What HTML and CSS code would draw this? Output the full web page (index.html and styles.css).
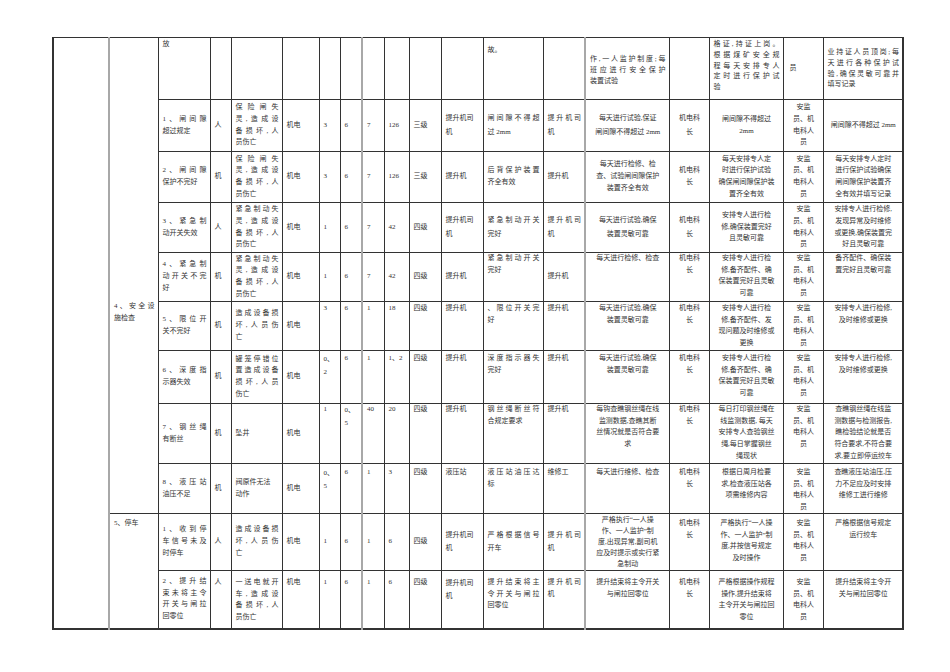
FILE: index.html
```html
<!DOCTYPE html>
<html lang="zh-CN">
<head>
<meta charset="utf-8">
<title>安全设施检查</title>
<link rel="stylesheet" href="styles.css">
</head>
<body>
<div class="sheet">
<table class="grid">
<colgroup>
<col class="w1"><col class="w2 g"><col class="w3"><col class="w4"><col class="w5"><col class="w6"><col class="w7"><col class="w8"><col class="w9 g"><col class="w10"><col class="w11"><col class="w12"><col class="w13"><col class="w14"><col class="w15 g"><col class="w16"><col class="w17"><col class="w18"><col class="w19">
</colgroup>
<tbody>
<tr class="r0">
<td rowspan="11"></td>
<td rowspan="9" class="sec"><span class="jl">4、安全设</span>施检查</td>
<td class="t">放</td>
<td></td><td></td><td></td><td></td><td></td><td></td><td></td><td></td><td></td>
<td class="t p6">故。</td>
<td></td>
<td class="up"><span class="jl">作,一人监护制度;每</span><span class="jl">班应进行安全保护</span>装置试验</td>
<td></td>
<td class="t"><span class="jl">格证,持证上岗。</span><span class="jl">根据煤矿安全规</span><span class="jl">程每天安排专人</span><span class="jl">定时进行保护试</span>验</td>
<td class="ind">员</td>
<td><span class="jl">业持证人员顶岗;每</span><span class="jl">天进行各种保护试</span><span class="jl">验,确保灵敏可靠并</span>填写记录</td>
</tr>
<tr class="r1">
<td><span class="jl">1、闸间隙</span>超过规定</td>
<td>人</td>
<td><span class="jl">保险闸失</span><span class="jl">灵,造成设</span><span class="jl">备损坏,人</span>员伤亡</td>
<td>机电</td><td>3</td><td>6</td><td>7</td><td>126</td><td>三级</td>
<td class="l13">提升机司<br>机</td>
<td class="l13"><span class="jl">闸间隙不得超</span>过 2mm</td>
<td class="l13"><span class="jl">提升机司</span>机</td>
<td class="c l13">每天进行试验,保证<br>闸间隙不得超过 2mm</td>
<td class="c l13">机电科<br>长</td>
<td class="c">闸间隙不得超过<br>2mm</td>
<td class="c">安监<br>员、机<br>电科人<br>员</td>
<td class="c">闸间隙不得超过 2mm</td>
</tr>
<tr class="r2">
<td><span class="jl">2、闸间隙</span>保护不完好</td>
<td>机</td>
<td><span class="jl">保险闸失</span><span class="jl">灵,造成设</span><span class="jl">备损坏,人</span>员伤亡</td>
<td>机电</td><td>3</td><td>6</td><td>7</td><td>126</td><td>三级</td>
<td>提升机</td>
<td><span class="jl">后背保护装置</span>齐全有效</td>
<td>提升机</td>
<td class="c">每天进行检修、检<br>查、试验闸间隙保护<br>装置齐全有效</td>
<td class="c">机电科<br>长</td>
<td class="c">每天安排专人定<br>时进行保护试验<br>确保闸间隙保护装<br>置齐全有效</td>
<td class="c">安监<br>员、机<br>电科人<br>员</td>
<td class="c">每天安排专人定时<br>进行保护试验确保<br>闸间隙保护装置齐<br>全有效并填写记录</td>
</tr>
<tr class="r3">
<td><span class="jl">3、紧急制</span>动开关失效</td>
<td>人</td>
<td><span class="jl">紧急制动失</span><span class="jl">灵,造成设</span><span class="jl">备损坏,人</span>员伤亡</td>
<td>机电</td><td>1</td><td>6</td><td>7</td><td>42</td><td>四级</td>
<td class="l13">提升机司<br>机</td>
<td class="l13"><span class="jl">紧急制动开关</span>完好</td>
<td class="l13"><span class="jl">提升机司</span>机</td>
<td class="c l13">每天进行试验,确保<br>装置灵敏可靠</td>
<td class="c l13">机电科<br>长</td>
<td class="c">安排专人进行检<br>修,确保装置完好<br>且灵敏可靠</td>
<td class="c">安监<br>员、机<br>电科人<br>员</td>
<td class="c">安排专人进行检修,<br>发现异常及时维修<br>或更换,确保装置完<br>好且灵敏可靠</td>
</tr>
<tr class="r4">
<td><span class="jl">4、紧急制</span><span class="jl">动开关不完</span>好</td>
<td>机</td>
<td><span class="jl">紧急制动失</span><span class="jl">灵,造成设</span><span class="jl">备损坏,人</span>员伤亡</td>
<td>机电</td><td>1</td><td>6</td><td>7</td><td>42</td><td>四级</td>
<td>提升机</td>
<td class="t"><span class="jl">紧急制动开关</span>完好</td>
<td>提升机</td>
<td class="c t">每天进行检修、检查</td>
<td class="c t">机电科<br>长</td>
<td class="c t">安排专人进行检<br>修,备齐配件、确<br>保装置完好且灵敏<br>可靠</td>
<td class="c t">安监<br>员、机<br>电科人<br>员</td>
<td class="c t">备齐配件、确保装<br>置完好且灵敏可靠</td>
</tr>
<tr class="r5">
<td><span class="jl">5、限位开</span>关不完好</td>
<td>机</td>
<td><span class="jl">造成设备损</span><span class="jl">坏,人员伤</span>亡</td>
<td>机电</td>
<td class="t">3</td><td class="t">6</td><td class="t">1</td><td class="t">18</td><td class="t">四级</td><td class="t">提升机</td>
<td class="t"><span class="jl">、限位开关完</span>好</td>
<td class="t">提升机</td>
<td class="c t">每天进行试验,确保<br>装置灵敏可靠</td>
<td class="c t">机电科<br>长</td>
<td class="c t">安排专人进行检<br>修,备齐配件、发<br>现问题及时维修或<br>更换</td>
<td class="c t">安监<br>员、机<br>电科人<br>员</td>
<td class="c t">安排专人进行检修,<br>及时维修或更换</td>
</tr>
<tr class="r6">
<td><span class="jl">6、深度指</span>示器失效</td>
<td>机</td>
<td><span class="jl">罐笼停错位</span><span class="jl">置造成设备</span><span class="jl">损坏,人员</span>伤亡</td>
<td>机电</td>
<td class="t l13">0、<br>2</td><td class="t">6</td><td class="t">1</td><td class="t">1、2</td><td class="t">四级</td><td class="t">提升机</td>
<td class="t"><span class="jl">深度指示器失</span>完好</td>
<td class="t">提升机</td>
<td class="c t">每天进行试验,确保<br>装置灵敏可靠</td>
<td class="c t">机电科<br>长</td>
<td class="c t">安排专人进行检<br>修,备齐配件、确<br>保装置完好且灵敏<br>可靠</td>
<td class="c t">安监<br>员、机<br>电科人<br>员</td>
<td class="c t">安排专人进行检修,<br>及时维修或更换</td>
</tr>
<tr class="r7">
<td><span class="jl">7、钢丝绳</span>有断丝</td>
<td>机</td>
<td>坠井</td>
<td>机电</td>
<td class="t">1</td><td class="t l13">0、<br>5</td><td class="t">40</td><td class="t">20</td><td class="t">四级</td><td class="t">提升机</td>
<td class="t"><span class="jl">钢丝绳断丝符</span>合规定要求</td>
<td class="t">提升机</td>
<td class="c t">每钩查瞧钢丝绳在线<br>监测数据,查瞧其断<br>丝情况就是否符合要<br>求</td>
<td class="c t">机电科<br>长</td>
<td class="c t">每日打印钢丝绳在<br>线监测数据, 每天<br>安排专人查验钢丝<br>绳,每日掌握钢丝<br>绳现状</td>
<td class="c t">安监<br>员、机<br>电科人<br>员</td>
<td class="c t">查瞧钢丝绳在线监<br>测数据与检测报告,<br>瞧检验结论就是否<br>符合要求,不符合要<br>求,要立即停运绞车</td>
</tr>
<tr class="r8">
<td><span class="jl">8、液压站</span>油压不足</td>
<td>机</td>
<td>阀原件无法<br>动作</td>
<td>机电</td>
<td class="t l13">0、<br>5</td><td class="t">6</td><td class="t">1</td><td class="t">3</td><td class="t">四级</td><td class="t">液压站</td>
<td class="t"><span class="jl">液压站油压达</span>标</td>
<td class="t">维修工</td>
<td class="c t">每天进行维修、检查</td>
<td class="c t">机电科<br>长</td>
<td class="c t">根据日周月检要<br>求,检查液压站各<br>项需维修内容</td>
<td class="c t">安监<br>员、机<br>电科人<br>员</td>
<td class="c t">查瞧液压站油压,压<br>力不足应及时安排<br>维修工进行维修</td>
</tr>
<tr class="r9">
<td rowspan="2" class="sec2">5、停车</td>
<td><span class="jl">1、收到停</span><span class="jl">车信号未及</span>时停车</td>
<td>人</td>
<td><span class="jl">造成设备损</span><span class="jl">坏,人员伤</span>亡</td>
<td>机电</td><td>1</td><td>6</td><td>1</td><td>6</td><td>四级</td>
<td class="l13">提升机司<br>机</td>
<td class="l13"><span class="jl">严格根据信号</span>开车</td>
<td class="l13"><span class="jl">提升机司</span>机</td>
<td class="c t tight">严格执行“一人操<br>作、一人监护”制<br>度,出现异常,副司机<br>应及时提示或实行紧<br>急制动</td>
<td class="c t">机电科<br>长</td>
<td class="c t">严格执行“一人操<br>作、一人监护”制<br>度,并按信号规定<br>及时操作</td>
<td class="c t">安监<br>员、机<br>电科人<br>员</td>
<td class="c t">严格根据信号规定<br>运行绞车</td>
</tr>
<tr class="r10">
<td><span class="jl">2、提升结</span><span class="jl">束未将主令</span><span class="jl">开关与闸拉</span>回零位</td>
<td class="t">人</td>
<td class="t"><span class="jl">一送电就开</span><span class="jl">车,造成设</span><span class="jl">备损坏,人</span>员伤亡</td>
<td class="t">机电</td><td class="t">1</td><td class="t">6</td><td class="t">1</td><td class="t">6</td><td class="t">四级</td>
<td class="t l13">提升机司<br>机</td>
<td class="t"><span class="jl">提升结束将主</span><span class="jl">令开关与闸拉</span>回零位</td>
<td class="t"><span class="jl">提升机司</span>机</td>
<td class="c t">提升结束将主令开关<br>与闸拉回零位</td>
<td class="c t">机电科<br>长</td>
<td class="c t">严格根据操作规程<br>操作,提升结束将<br>主令开关与闸拉回<br>零位</td>
<td class="c t">安监<br>员、机<br>电科人<br>员</td>
<td class="c t">提升结束将主令开<br>关与闸拉回零位</td>
</tr>
</tbody>
</table>
</div>
</body>
</html>
```

FILE: styles.css
```css
html, body {
  margin: 0;
  padding: 0;
  background: #ffffff;
}

body {
  font-family: "Liberation Serif", "Noto Sans CJK SC", serif;
  font-size: 7px;
  color: #333333;
}

.sheet {
  padding: 37px 0 0 52px;
}

.grid {
  border-collapse: collapse;
  table-layout: fixed;
  width: 850px;
  border-top: 1px solid #333333;
  border-left: 2px solid #333333;
  border-right: 2px solid #333333;
  border-bottom: 2px solid #333333;
}

.grid td {
  border: 1px solid #333333;
  padding: 0 3px 0 4px;
  vertical-align: middle;
  text-align: left;
  line-height: 11.7px;
}

col.g { border-left: 2px solid #a8a8a8; }

col.w1 { width: 56px; }
col.w2 { width: 49px; }
col.w3 { width: 52px; }
col.w4 { width: 21px; }
col.w5 { width: 51px; }
col.w6 { width: 37px; }
col.w7 { width: 21px; }
col.w8 { width: 22px; }
col.w9 { width: 22px; }
col.w10 { width: 25px; }
col.w11 { width: 32px; }
col.w12 { width: 42px; }
col.w13 { width: 60px; }
col.w14 { width: 42px; }
col.w15 { width: 84px; }
col.w16 { width: 40px; }
col.w17 { width: 74px; }
col.w18 { width: 40px; }
col.w19 { width: 80px; }

.r0 { height: 62px; }
.r1 { height: 52px; }
.r2 { height: 51px; }
.r3 { height: 50px; }
.r4 { height: 49px; }
.r5 { height: 49px; }
.r6 { height: 53px; }
.r7 { height: 60px; }
.r8 { height: 50px; }
.r9 { height: 57px; }
.r10 { height: 58px; }

.grid td.t { vertical-align: top; }
.grid td.c { text-align: center; }
.grid td.l13 { line-height: 13.3px; }

.jl {
  display: block;
  text-align: justify;
  text-align-last: justify;
}

.r0 td { line-height: 10.8px; }
.r0 td.t { padding-top: 1px; }
.r0 td.p6 { padding-top: 7px; }
.r0 td.up { padding-top: 4px; }
.r0 td.ind { padding-left: 6px; }
.r4 td.t { padding-top: 0; }
.r5 td.t { padding-top: 1px; }
.r6 td.t { padding-top: 2px; }
.r7 td.t { padding-top: 0; }
.r8 td { line-height: 11.5px; }
.r8 td.t { padding-top: 3px; }
.r9 td.t { padding-top: 4px; }
.r9 td.tight { padding-top: 1px; line-height: 11px; }
.r10 td.t { padding-top: 6px; }

.grid td.sec {
  vertical-align: top;
  padding-top: 262px;
  line-height: 12px;
}

.grid td.sec2 {
  vertical-align: top;
  padding-top: 4px;
}
```
